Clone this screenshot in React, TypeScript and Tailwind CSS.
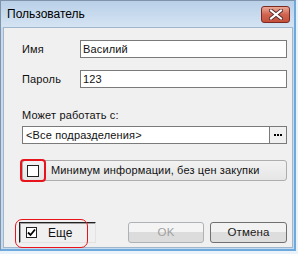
import React from 'react';

function CloseGlyph() {
  return (
    <svg width="14" height="11" viewBox="0 0 14 11">
      <path d="M2 1.5 L12 9.5 M12 1.5 L2 9.5" stroke="#5a3030" strokeWidth="4" strokeLinecap="square" />
      <path d="M2 1.5 L12 9.5 M12 1.5 L2 9.5" stroke="#ffffff" strokeWidth="2" strokeLinecap="square" />
    </svg>
  );
}

function CheckMark() {
  return (
    <svg width="9" height="9" viewBox="0 0 9 9">
      <path d="M1 4.5 L3.5 7 L8 1.5" stroke="#000" strokeWidth="1.8" fill="none" />
    </svg>
  );
}

export default function App() {
  return (
    <div className="w-[298px] h-[254px] bg-[#eaf2fa] font-['Liberation_Sans',Arial,sans-serif] text-[11px] tracking-[0.15px] text-[#111]">
      <div className="w-[296px] h-[251px] flex flex-col border-l border-t border-r-2 border-b-2 border-l-[#7f93ab] border-t-[#7f93ab] border-r-[#6fa8dc] border-b-[#6fa8dc] bg-[#c7dbef]">
        {/* Title bar */}
        <div className="h-[26px] flex items-start justify-between bg-linear-to-b from-[#b9d0e8] to-[#d5e4f3]">
          <span className="pl-[6px] pt-[6px] text-[12px] leading-[14px] tracking-normal text-black">Пользователь</span>
          <button className="mt-[5px] mr-[4px] w-[29px] h-[17px] rounded-[3px] border border-[#7a2a22] bg-linear-to-b from-[#eaa896] via-[#d06450] to-[#c4503a] flex items-center justify-center">
            <CloseGlyph />
          </button>
        </div>

        {/* Client area */}
        <div className="ml-[2px] mr-[1px] mb-[1px] flex-1 flex flex-col border border-[#9fb6cd] bg-[#f0f0f0]">
          <div className="pl-[18px] pr-[5px] pt-[12px] flex flex-col">
            <div className="flex items-center h-[18px]">
              <span className="w-[58px]">Имя</span>
              <div className="flex-1 h-[18px] border border-[#7a7a7a] bg-white pl-[2px] leading-[16px]">Василий</div>
            </div>
            <div className="flex items-center h-[18px] mt-[12px]">
              <span className="w-[58px]">Пароль</span>
              <div className="flex-1 h-[18px] border border-[#7a7a7a] bg-white pl-[2px] leading-[16px]">123</div>
            </div>
            <div className="mt-[21px] leading-[13px]">Может работать с:</div>
            <div className="mt-[4px] flex h-[18px]">
              <div className="flex-1 border border-[#7a7a7a] bg-white pl-[3px] leading-[16px]">&lt;Все подразделения&gt;</div>
              <div className="w-[17px] border border-l-0 border-[#7a7a7a] bg-[#f0f0f0] flex items-center justify-center gap-[1px]">
                <span className="w-[2px] h-[2px] bg-black" />
                <span className="w-[2px] h-[2px] bg-black" />
                <span className="w-[2px] h-[2px] bg-black" />
              </div>
            </div>
            <div className="relative mt-[16px] h-[21px] rounded-[3px] border border-[#adadad] bg-linear-to-b from-[#f2f2f2] to-[#e6e6e6] flex items-center">
              <div className="ml-[4px] w-[12px] h-[12px] border-[1.5px] border-[#222] bg-white" />
              <span className="ml-[12px]">Минимум информации, без цен закупки</span>
              <div className="absolute left-[-3px] top-[-2px] w-[26px] h-[23px] rounded-[4px] border-2 border-[#e8141c]" />
            </div>
          </div>

          <div className="mt-auto mb-[4px] pl-[15px] pr-[5px] flex items-end justify-between">
            <div className="relative w-[77px] h-[21px] border-t border-l border-[#222] border-r border-b border-r-[#e3e3e3] border-b-[#e3e3e3] bg-[#f0f0f0] flex items-center shadow-[inset_1px_1px_0_#a0a0a0]">
              <div className="ml-[6px] w-[11px] h-[11px] border border-[#222] bg-white flex items-center justify-center">
                <CheckMark />
              </div>
              <span className="ml-[11px] text-[12px] font-normal tracking-normal">Еще</span>
              <div className="absolute left-[-5px] top-[-4px] w-[73px] h-[29px] rounded-[7px] border border-[#e8141c]" />
            </div>
            <div className="flex gap-[6px]">
              <button className="w-[76px] h-[21px] rounded-[3px] border border-[#adb2b5] bg-linear-to-b from-[#f4f4f4] from-50% to-[#dcdcdc] to-50% text-[11.5px] font-normal text-[#a0a0a0]">OK</button>
              <button className="w-[77px] h-[21px] rounded-[3px] border border-[#707070] bg-linear-to-b from-[#f2f2f2] from-50% to-[#dddddd] to-50% text-[11.5px] font-normal text-[#1a1a1a]">Отмена</button>
            </div>
          </div>
        </div>
      </div>
    </div>
  );
}
